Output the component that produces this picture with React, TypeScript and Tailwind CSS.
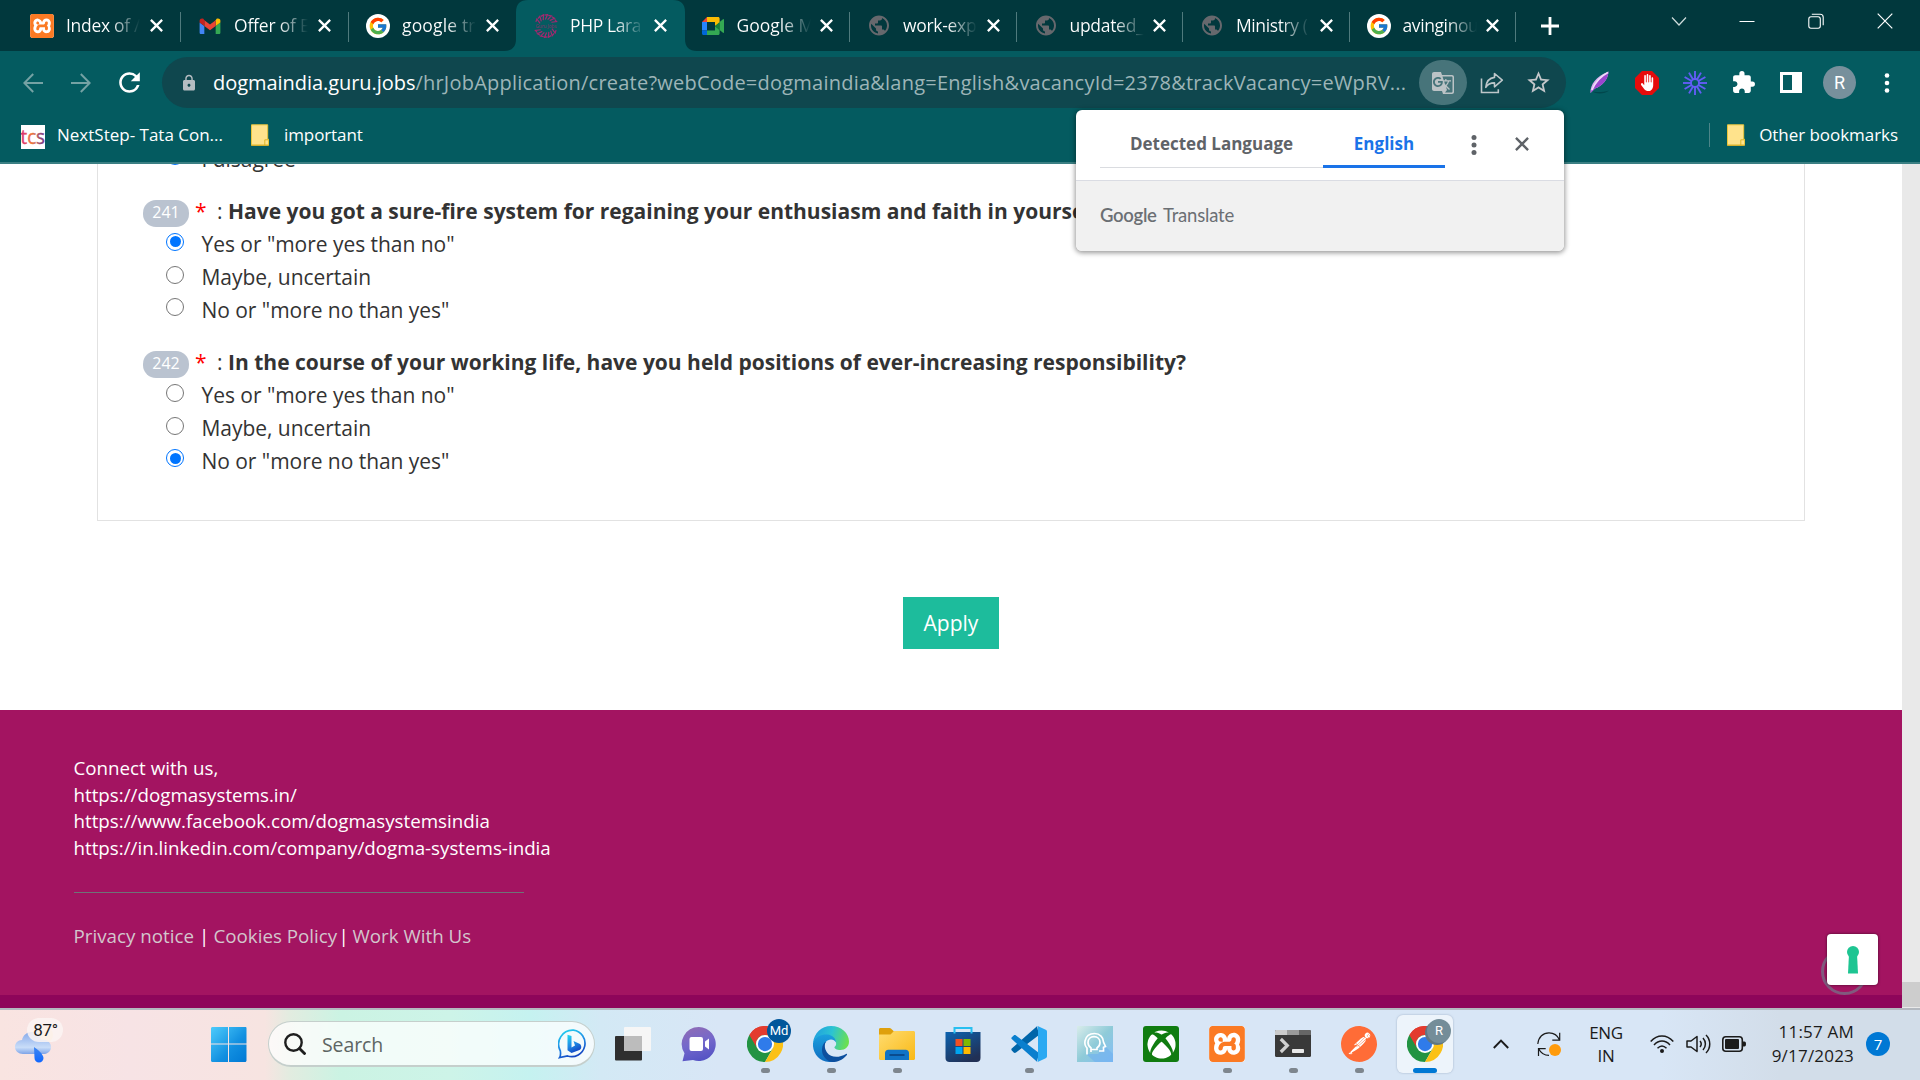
import React from "react";
import { FcGoogle } from "react-icons/fc";
import { FaXbox } from "react-icons/fa";
import { FaHand } from "react-icons/fa6";
import { SiXampp, SiPostman } from "react-icons/si";
import { MdPublic, MdLock, MdRefresh, MdStarBorder, MdExtension, MdGTranslate } from "react-icons/md";

/* ---------- small icons ---------- */

function XamppIcon({ large }: { large?: boolean }) {
  return (
    <span className={`flex items-center justify-center rounded-[3px] bg-white ${large ? "size-9" : "size-6"}`}>
      <SiXampp size={large ? 36 : 24} color="#fb7a24" />
    </span>
  );
}

function GmailIcon() {
  return (
    <svg viewBox="0 0 24 18" className="mt-px h-[17px] w-6">
      <path fill="#4285f4" d="M1 2.500v13C1 16.300 1.600 17 2.500 17H6V8.500L1 4.800z" />
      <path fill="#34a853" d="M18 17h3.500c.9 0 1.500-.7 1.500-1.500V4.800L18 8.500z" />
      <path fill="#fbbc04" d="M18 2.300v6.200l5-3.700V2.900C23 .8 20.600-.2 19 .9z" />
      <path fill="#ea4335" d="M6 8.500V2.300l6 4.500 6-4.500v6.200L12 13z" />
      <path fill="#c5221f" d="M1 2.900v1.900l5 3.700V2.300L5 .9C3.400-.2 1 .8 1 2.900z" />
    </svg>
  );
}

function GoogleIcon() {
  return (
    <span className="flex size-6 items-center justify-center rounded-full bg-white">
      <FcGoogle size={20} />
    </span>
  );
}

function GuruIcon() {
  return (
    <svg viewBox="0 0 24 24" className="size-6">
      {Array.from({ length: 18 }, (_, i) =>
        i % 9 === 4 || i % 9 === 5 ? null : (
          <path key={i} d="M10.500 1.200 13.500.6 11.400 5.500" fill="none" stroke="#a3286f" strokeWidth="1.200" transform={`rotate(${i * 20} 12 12)`} />
        ),
      )}
      <text x="12" y="13.500" fontSize="4.600" textAnchor="middle" fill="#8d2d69" fontFamily="Open Sans">Guru Jobs</text>
    </svg>
  );
}

function MeetIcon() {
  return (
    <svg viewBox="0 0 24 20" className="h-[20px] w-6">
      <path fill="#fbbc04" d="M6 1h11c1 0 1.600.6 1.600 1.500V7L14 10V6H6z" />
      <path fill="#ea4335" d="M6 1v5H1z" />
      <path fill="#2684fc" d="M1 6h5v8.500H1z" />
      <path fill="#0066da" d="M1 14.500h5V19H2.500C1.600 19 1 18.400 1 17.500z" />
      <path fill="#34a853" d="M6 14.500h8v-4.500l4.600 4v3.500c0 .9-.6 1.500-1.600 1.500H6z" />
      <path fill="#188038" d="M14 10l4.600-4v8z" />
      <path fill="#34a853" d="M18.600 6 22 3.200c.5-.4 1-.1 1 .5v12.600c0 .6-.5.9-1 .5L18.600 14z" />
    </svg>
  );
}

const Globe = () => <MdPublic size={25} color="#66686d" />;

function Cross({ size, width, color = "#fff" }: { size: number; width: number; color?: string }) {
  return (
    <svg viewBox="0 0 12 12" width={size} height={size} className="shrink-0">
      <path d="M.8.8l10.400 10.400M11.200.8.8 11.200" stroke={color} strokeWidth={width} />
    </svg>
  );
}

function Dots({ color, r }: { color: string; r: number }) {
  return (
    <svg viewBox="0 0 6 20" className="h-5 w-1.5 shrink-0" fill={color}>
      <circle cx="3" cy="2.500" r={r} />
      <circle cx="3" cy="10" r={r} />
      <circle cx="3" cy="17.500" r={r} />
    </svg>
  );
}

function BackArrow({ flip }: { flip?: boolean }) {
  return (
    <svg viewBox="0 0 20 20" className={flip ? "size-5 rotate-180" : "size-5"} fill="none" stroke="#75a2a4" strokeWidth="2">
      <path d="M20 10H1.500M10.200 1 1.300 10l8.900 9" />
    </svg>
  );
}

function FolderMark() {
  return (
    <svg viewBox="0 0 18 22" className="h-[22px] w-[18px] shrink-0">
      <path d="M.5.8h16.200v14.400h.8v6H.5z" fill="#ffe38c" stroke="#e9c53b" />
      <path d="M13.800 21v-5.200h3.400" fill="none" stroke="#dfb629" />
      <path d="M.3 21.300h17.200" stroke="#d8b02b" strokeWidth="1.200" />
    </svg>
  );
}

/* ---------- tab strip ---------- */

type Tab = { icon: React.ReactNode; title: string; width: string; track: string; active?: boolean; line?: boolean };

const tabs: Tab[] = [
  { icon: <XamppIcon />, title: "Index of /", width: "w-[168px]", track: "tracking-[-0.3px]", line: true },
  { icon: <GmailIcon />, title: "Offer of E", width: "w-[168px]", track: "tracking-[-0.2px]", line: true },
  { icon: <GoogleIcon />, title: "google tr", width: "w-[168px]", track: "tracking-[0.15px]" },
  { icon: <GuruIcon />, title: "PHP Lara", width: "w-[166.500px]", track: "tracking-[-0.4px]", active: true },
  { icon: <MeetIcon />, title: "Google M", width: "w-[166.500px]", track: "tracking-[0px]", line: true },
  { icon: <Globe />, title: "work-exp", width: "w-[166.500px]", track: "tracking-[-0.3px]", line: true },
  { icon: <Globe />, title: "updated_", width: "w-[166.500px]", track: "tracking-[-0.3px]", line: true },
  { icon: <Globe />, title: "Ministry (", width: "w-[166.500px]", track: "tracking-[-0.4px]", line: true },
  { icon: <GoogleIcon />, title: "avinginou", width: "w-[166.500px]", track: "tracking-[-0.4px]", line: true },
];

function TabItem({ tab }: { tab: Tab }) {
  return (
    <div className={`relative flex h-full shrink-0 items-center pl-[17px] ${tab.width}`}>
      {tab.active && (
        <svg viewBox="0 0 193 51" className="absolute top-0 -left-[13px] h-[51px] w-[193px]">
          <path d="M0 51C8 51 12 47 12 39V12C12 4 16 0 24 0H169c8 0 12 4 12 12V39c0 8 4 12 12 12z" fill="#045b60" />
        </svg>
      )}
      <span className="relative flex size-6 shrink-0 items-center justify-center">{tab.icon}</span>
      <span className={`relative ml-3 w-[74px] overflow-hidden bg-gradient-to-r from-white from-60% to-transparent bg-clip-text pb-px text-[17.500px] leading-[26px] whitespace-nowrap text-transparent ${tab.track}`}>
        {tab.title}
      </span>
      <span className="relative ml-[8px] flex w-4 justify-center">
        <Cross size={13} width={2.100} />
      </span>
      {tab.line && <span className="absolute top-3 right-0 h-[30px] w-px bg-[#4f7a7d]" />}
    </div>
  );
}

function TabStrip() {
  return (
    <div className="flex h-[51px] items-center bg-[#01383d] pl-[13px]">
      {tabs.map((t) => (
        <TabItem key={t.title} tab={t} />
      ))}
      <svg viewBox="0 0 18 18" className="ml-[25px] size-[18px]" stroke="#fff" strokeWidth="2.800">
        <path d="M9 0v18M0 9h18" />
      </svg>
      <div className="ml-auto flex h-full items-start pt-[13px] pr-[27px]">
        <svg viewBox="0 0 16 16" className="mr-[52px] size-4" fill="none" stroke="#cfdcdc" strokeWidth="1.200">
          <path d="M1 4.500l7 7.500 7-7.500" />
        </svg>
        <svg viewBox="0 0 16 16" className="mr-[53px] size-4" stroke="#fff" strokeWidth="1">
          <path d="M.5 8.500h15" />
        </svg>
        <svg viewBox="0 0 16 16" className="mr-[53px] size-4" fill="none" stroke="#fff" strokeWidth="1.100">
          <rect x=".8" y="3.700" width="11.500" height="11.500" rx="2.200" />
          <path d="M3.800 1.200h8.400c2 0 3 1 3 3v8" />
        </svg>
        <svg viewBox="0 0 16 16" className="size-4" stroke="#fff" strokeWidth="1.200">
          <path d="M.7.7l14.600 14.600M15.300.7.7 15.300" />
        </svg>
      </div>
    </div>
  );
}

/* ---------- toolbar ---------- */

function Toolbar() {
  return (
    <div className="flex h-[63px] items-center pl-[23px]">
      <BackArrow />
      <span className="ml-7 flex">
        <BackArrow flip />
      </span>
      <MdRefresh size={31} color="#fff" className="ml-[23px]" />
      <div className="ml-[17px] flex h-[51px] w-[1404px] shrink-0 items-center rounded-full bg-[#0f474e] pl-[18px]">
        <MdLock size={18} color="#b5bdc2" className="shrink-0" />
        <div className="ml-[15px] w-[1206px] text-[20px] leading-[30px] whitespace-nowrap text-[#9db5b8]">
          <span className="tracking-[-0.05px] text-white">dogmaindia.guru.jobs</span>
          <span className="tracking-[0.225px]">/hrJobApplication/create?webCode=dogmaindia&amp;lang=English&amp;vacancyId=2378&amp;trackVacancy=eWpRV...</span>
        </div>
        <span className="flex h-[45px] w-[48px] shrink-0 items-center justify-center rounded-full bg-[#47747a]">
          <MdGTranslate size={24} color="#bcc3c6" />
        </span>
        <svg viewBox="0 0 24 22" className="ml-[13px] h-[22px] w-6 shrink-0" fill="none" stroke="#bdc6c9" strokeWidth="1.600">
          <path d="M1.500 6.500v14h16.800v-3.200" />
          <path d="M14.500 1.500l7.800 6.700-7.800 6.600v-3.900c-4 0-7 1.500-8.700 4.500.5-5.600 3.400-9.400 8.700-10z" strokeLinejoin="round" />
        </svg>
        <MdStarBorder size={27} color="#c4c7ca" className="ml-[21px] shrink-0" />
      </div>
      <div className="flex items-center pl-6">
        <svg viewBox="0 0 20 24" className="h-6 w-5">
          <path d="M1 20c4 1.600 12 1.500 18-.5-4 3.500-13 4-18 .5z" fill="#01474c" />
          <path d="M.5 22C0 14 6 5 18.500.5 18 9 12 15 5 17.500z" fill="#d9aef0" />
          <path d="M.5 22C3 15 8 8 18.500.5 18 9 12 15 5 17.500z" fill="#9a45cf" />
          <path d="M2 19C5 12 11 5 18 1.500" stroke="#f0dcfa" strokeWidth="1.500" fill="none" />
        </svg>
        <span className="relative ml-[25px] flex size-6 items-center justify-center">
          <svg viewBox="0 0 24 24" className="absolute inset-0 size-6">
            <path d="M7 0h10l7 7v10l-7 7H7l-7-7V7z" fill="#e60c0c" />
          </svg>
          <FaHand size={16} color="#fff" className="relative h-[17px] w-[13px]" preserveAspectRatio="none" />
        </span>
        <svg viewBox="0 0 24 24" className="ml-6 size-6" stroke="#625df5" fill="none" strokeWidth="1.900">
          <circle cx="12" cy="12" r="4" />
          {Array.from({ length: 12 }, (_, i) => (
            <path key={i} d="M12 0v8" transform={`rotate(${i * 30} 12 12)`} />
          ))}
        </svg>
        <MdExtension size={25} color="#fff" className="ml-[24px]" />
        <svg viewBox="0 0 22 21" className="ml-6 h-[21px] w-[22px]">
          <path d="M0 0h22v21H0zM3 3v15h9V3z" fill="#fff" fillRule="evenodd" />
        </svg>
        <span className="ml-[21px] flex size-[33px] items-center justify-center rounded-full bg-[#77909c] font-[Roboto] text-[18px] text-white">R</span>
        <span className="ml-7 flex">
          <Dots color="#fff" r={2.300} />
        </span>
      </div>
    </div>
  );
}

function Bookmarks() {
  return (
    <div className="flex h-[48px] items-center pb-[6px] pl-[21px] text-[17px] text-white">
      <span className="mt-1 flex size-6 items-center justify-center overflow-hidden bg-white">
        <svg viewBox="0 0 24 24" className="size-6">
          <defs>
            <linearGradient id="tcs" x1="0" x2="1">
              <stop offset="0" stopColor="#d6247c" />
              <stop offset=".45" stopColor="#f0793c" />
              <stop offset="1" stopColor="#6a2d91" />
            </linearGradient>
          </defs>
          <text x="-.5" y="19" fontSize="20" textLength="24.500" lengthAdjust="spacingAndGlyphs" fill="url(#tcs)" stroke="url(#tcs)" strokeWidth=".4" fontFamily="Open Sans">tcs</text>
        </svg>
      </span>
      <span className="ml-3 w-[168px] tracking-[0px] whitespace-nowrap">NextStep- Tata Con...</span>
      <span className="ml-[26px] flex">
        <FolderMark />
      </span>
      <span className="ml-[15px] tracking-[-0.1px]">important</span>
      <span className="ml-auto h-6 w-px bg-[#4c8589]" />
      <span className="ml-[17px] flex">
        <FolderMark />
      </span>
      <span className="mr-[22px] ml-[14px] tracking-[-0.05px]">Other bookmarks</span>
    </div>
  );
}

function TranslatePopup() {
  return (
    <div className="absolute top-[110px] left-[1076px] z-10 flex h-[141px] w-[488px] flex-col overflow-hidden rounded-md bg-white shadow-[0_1px_5px_1px_rgba(0,0,0,0.4)]">
      <div className="flex h-[71px] items-center border-b border-[#dadce3] pl-6">
        <div className="flex h-[58px] w-[223px] items-center justify-center self-start border-b border-[#dadce0] pt-[10px] text-[17px] font-bold tracking-[0px] text-[#5f6368]">
          Detected Language
        </div>
        <div className="flex h-[58px] w-[122px] items-center justify-center self-start border-b-[3px] border-[#1a73e8] pt-[12px] text-[17px] font-bold text-[#1a73e8]">
          English
        </div>
        <span className="ml-[26px] flex">
          <Dots color="#5f6368" r={2.500} />
        </span>
        <span className="ml-[38px] pb-[3px]">
          <Cross size={14} width={2} color="#5f6368" />
        </span>
      </div>
      <div className="flex flex-1 items-center bg-[#f1f1f1] pb-px pl-6 font-[Lato] text-[18.500px] text-[#6b6f74]">
        <span className="w-[60px] font-semibold tracking-[-0.3px]">Google</span>
        <span className="ml-[3px] tracking-[-0.2px]">Translate</span>
      </div>
    </div>
  );
}

/* ---------- form ---------- */

function Option({ label, checked }: { label: string; checked?: boolean }) {
  return (
    <div className="flex h-[32.670px] items-center pl-[23px]">
      <span className={`-mt-[4px] flex size-[18px] items-center justify-center rounded-full ${checked ? "border-[1.500px] border-[#0075ff]" : "border-[1.500px] border-[#767676]"}`}>
        {checked && <span className="size-[11px] rounded-full bg-[#0075ff]" />}
      </span>
      <span className="ml-[17.500px] pt-[2.500px] tracking-[-0.04px]">{label}</span>
    </div>
  );
}

const answers = ['Yes or "more yes than no"', "Maybe, uncertain", 'No or "more no than yes"'];

function Question({ no, text, picked }: { no: number; text: string; picked: number }) {
  return (
    <div className="mt-[21px]">
      <div className="mb-0.5 flex h-[30px] leading-[30px] whitespace-nowrap">
        <span className="mt-1 flex h-[27px] w-[46px] items-center justify-center rounded-[13px] bg-[#bac3d0] pb-[3px] text-[16px] leading-6 text-white">{no}</span>
        <span className="ml-[6px] w-[22px] text-[#f00]">*</span>
        <span className="w-[11px] text-[#333]">:</span>
        <span className="font-bold text-[#333]">{text}</span>
      </div>
      {answers.map((a, i) => (
        <Option key={a} label={a} checked={i === picked} />
      ))}
    </div>
  );
}

function Page() {
  return (
    <div className="flex h-[844px] overflow-hidden bg-white">
      <div className="relative flex w-[1902px] flex-col">
        <div className="mr-[97px] ml-[97px] h-[357px] overflow-hidden border-x border-b border-[#e2e2e2] pl-[45px] text-[21px] text-[#333]">
          <div className="-mt-[22px]">
            <Option label="I disagree" checked />
          </div>
          <Question no={241} text="Have you got a sure-fire system for regaining your enthusiasm and faith in yourself?" picked={0} />
          <Question no={242} text="In the course of your working life, have you held positions of ever-increasing responsibility?" picked={2} />
        </div>
        <div className="mt-[76px] ml-[903px] flex h-[52px] w-[96px] items-center justify-center bg-[#1dbc9c] pt-[2px] text-[21px] text-white">Apply</div>
        <footer className="mt-[61px] flex-1 bg-[#a31461] pt-[45px] pl-[73.500px] text-[18.750px] leading-[26.670px] text-white">
          <p>Connect with us,</p>
          <p>https://dogmasystems.in/</p>
          <p>https://www.facebook.com/dogmasystemsindia</p>
          <p>https://in.linkedin.com/company/dogma-systems-india</p>
          <div className="mt-[30px] h-px w-[450px] bg-[#6f7377]" />
          <div className="mt-[30px] flex whitespace-nowrap text-[#d3c6cd]">
            <span className="w-[125.500px]">Privacy notice</span>
            <span className="w-[14.500px] text-white">|</span>
            <span className="w-[125px]">Cookies Policy</span>
            <span className="w-[14px] text-white">|</span>
            <span>Work With Us</span>
          </div>
        </footer>
        <div className="h-[13px] bg-[#8e055a]" />
        <span className="absolute right-[34px] bottom-[13px] size-[47px] rounded-full border-[3px] border-[#81597e]" />
        <span className="absolute right-6 bottom-[23px] flex size-[51px] items-center justify-center rounded bg-white shadow-[0_0_3px_rgba(0,0,0,0.6)]">
          <svg viewBox="0 0 12 28" className="h-7 w-3" fill="#1ec592">
            <circle cx="6" cy="6" r="6" />
            <path d="M2 8h8l1 19.500H1z" />
          </svg>
        </span>
      </div>
      <div className="flex flex-1 flex-col justify-end bg-[#e9e9e9]">
        <div className="mb-px h-[25px] bg-[#cdcdcd]" />
      </div>
    </div>
  );
}

/* ---------- taskbar ---------- */

function ChromeIcon() {
  return (
    <svg viewBox="0 0 48 48" className="size-9">
      <path d="M24 24 3.200 12A24 24 0 0 1 44.800 12z" fill="#e33b2e" />
      <path d="M24 24 3.200 12A24 24 0 0 0 24 48l10.400-18z" fill="#229342" />
      <path d="M24 12H44.800A24 24 0 0 1 24 48L34.400 30z" fill="#fbc116" />
      <path d="M3.200 12 13.600 30 24 12z" fill="#229342" />
      <path d="M24 12h20.800A24 24 0 0 0 3.200 12l10.400 18A12 12 0 0 1 24 12z" fill="#e33b2e" />
      <circle cx="24" cy="24" r="12" fill="#fff" />
      <circle cx="24" cy="24" r="9.500" fill="#2f7bea" />
    </svg>
  );
}

function ChromeWithBadge({ label, className }: { label: string; className: string }) {
  return (
    <span className="relative flex">
      <ChromeIcon />
      <span className={`absolute -top-[7px] -right-[8px] flex size-6 items-center justify-center rounded-full font-[Roboto] text-[13px] text-white ${className}`}>{label}</span>
    </span>
  );
}

function EdgeIcon() {
  return (
    <svg viewBox="0 0 36 36" className="size-9">
      <defs>
        <linearGradient id="eg1" x1="0" y1=".3" x2="1" y2=".5">
          <stop offset="0" stopColor="#1f9fe0" />
          <stop offset=".5" stopColor="#2cc3d2" />
          <stop offset="1" stopColor="#6be04f" />
        </linearGradient>
        <linearGradient id="eg2" x1="0" y1="0" x2="0" y2="1">
          <stop offset="0" stopColor="#1ba0de" />
          <stop offset="1" stopColor="#0f6cc0" />
        </linearGradient>
      </defs>
      <path d="M0 17C1 7 8.500 0 18 0c10.500 0 18 7.500 18 15.500 0 5.500-4 8.500-8.500 8.500-4 0-6.500-1.500-6-3 2-1.500 2-4 1-6C20 9 8 7 0 17z" fill="url(#eg1)" />
      <path d="M0 17C3 9.500 10 8 14.500 8.500c5 .5 8.500 4 8.500 8-1-2-3-3-5-3-5 0-7.500 5-6.500 10 1 6 5.500 10 10 12C8 38.500-1 28 0 17z" fill="url(#eg2)" />
      <path d="M13 15.500c-2 3-1.500 7.500 1 11 4 5.500 12 5.500 19 1.500.8-.4 1.300.2.900.9C30.500 33 25 36.500 19 36c-6-1-10.500-7-10-13 .3-4 2-6.500 4-7.500z" fill="#0c4f9e" />
    </svg>
  );
}

function ExplorerIcon() {
  return (
    <svg viewBox="0 0 36 36" className="size-9">
      <defs>
        <linearGradient id="fg" x1="0" y1="0" x2="1" y2="1">
          <stop offset="0" stopColor="#ffdc70" />
          <stop offset="1" stopColor="#f9b916" />
        </linearGradient>
      </defs>
      <path d="M0 10V3.500C0 2.600.6 2 1.500 2h9c.7 0 1.200.2 1.700.7L15 5.500V12H0z" fill="#dfa00c" />
      <path d="M0 8.500h11.500L15 5h19.500c.9 0 1.500.6 1.500 1.500v26c0 .9-.6 1.500-1.500 1.500h-33C.6 34 0 33.400 0 32.500z" fill="url(#fg)" />
      <path d="M6 34v-7c0-2 1.300-3.300 3.300-3.300h17.400c2 0 3.300 1.300 3.300 3.300v7z" fill="#1073c6" />
      <path d="M10.500 29h15" stroke="#0a4b8e" strokeWidth="2" />
    </svg>
  );
}

function StoreIcon() {
  return (
    <svg viewBox="0 0 36 36" className="size-9">
      <defs>
        <linearGradient id="st" x1="0" y1="0" x2=".6" y2="1">
          <stop offset="0" stopColor="#0c63b0" />
          <stop offset="1" stopColor="#213055" />
        </linearGradient>
      </defs>
      <path d="M.5 6h35v26c0 2.500-1.500 4-4 4h-27c-2.500 0-4-1.500-4-4z" fill="url(#st)" />
      <path d="M9.500 7.500V2h17v5.500" fill="none" stroke="#28bff0" strokeWidth="2" />
      <path fill="#f25022" d="M10.500 13h7v7h-7z" />
      <path fill="#7fba00" d="M18.500 13h7v7h-7z" />
      <path fill="#00a4ef" d="M10.500 21h7v7h-7z" />
      <path fill="#ffb900" d="M18.500 21h7v7h-7z" />
    </svg>
  );
}

function VscodeIcon() {
  return (
    <svg viewBox="0 0 36 36" className="size-9">
      <path d="M1 22.300 26 .3 28 9 5 26.500c-.8.600-1.700.5-2.300 0L.800 24.500c-.7-.7-.6-1.500.2-2.200z" fill="#0065a9" />
      <path d="M1 13.300 26 35.700 28 27 5 9.500c-.8-.6-1.700-.5-2.300 0L.800 11.200c-.7.7-.6 1.500.2 2.100z" fill="#0a7fce" />
      <path d="M25.600.4c.5-.4 1-.5 1.600-.2l7.500 3.600c.8.400 1.300 1 1.300 1.900v24.600c0 .9-.5 1.500-1.300 1.900l-7.500 3.600c-.6.300-1.100.2-1.600-.2.900.5 1.400-.2 1.400-1.100V1.500c0-.9-.5-1.600-1.400-1.100z" fill="#2aa9f2" />
    </svg>
  );
}

function MindIcon() {
  return (
    <svg viewBox="0 0 36 36" className="size-9">
      <defs>
        <linearGradient id="mi" x1="0" y1="0" x2="1" y2="1">
          <stop offset="0" stopColor="#d9ecea" />
          <stop offset=".5" stopColor="#8fcbd8" />
          <stop offset="1" stopColor="#83bdf8" />
        </linearGradient>
      </defs>
      <path d="M0 0h36v36H0z" fill="url(#mi)" />
      <path d="M9 28h12l7-8 8 8v8H18z" fill="#6fb0ee" opacity=".6" />
      <g fill="none" stroke="#fff" strokeWidth="1.700">
        <path d="M10 28.500V22c-2-2-2.500-4-2-7 1-5 5-7.500 9.500-7.500 5.500 0 9 4 9 8.500l2 4.500-2 .8v3.700h-4.500" />
        <path d="M14 26v-4c-2-1.500-3-3.300-3-5.500 0-3.500 2.500-5.800 6-5.800s6 2.300 6 5.800c0 2.200-1 4-3 5.500v1.500h-6" />
      </g>
    </svg>
  );
}

function TerminalIcon() {
  return (
    <svg viewBox="0 0 36 36" className="size-9">
      <rect y="4" width="36" height="27" rx="1.500" fill="#393939" />
      <path d="M0 9V5.500C0 4.600.6 4 1.500 4H12v5z" fill="#cbcbcb" />
      <path d="M12 4h12v5H12z" fill="#9a9a9a" />
      <path d="M24 4h10.500c.9 0 1.500.6 1.500 1.500V9H24z" fill="#666" />
      <path d="M5.800 13l6.500 6.500-6.500 6.500" fill="none" stroke="#d0d0d0" strokeWidth="3.200" />
      <rect x="17" y="23" width="12" height="4" rx=".8" fill="#e8e8e8" />
    </svg>
  );
}

function TaskViewIcon() {
  return (
    <svg viewBox="0 0 36 36" className="size-9">
      <rect y="10" width="27" height="24.500" rx="1" fill="#2f2f2f" />
      <rect x="9" y="1" width="27" height="24" rx="1" fill="#f6f6f6" />
      <path d="M9 10h18v15H9z" fill="#bcbcbc" />
    </svg>
  );
}

function ChatIcon() {
  return (
    <svg viewBox="0 0 36 36" className="size-9">
      <defs>
        <linearGradient id="ch" x1=".2" y1="0" x2=".5" y2="1">
          <stop offset="0" stopColor="#8f6cb5" />
          <stop offset=".5" stopColor="#7468cb" />
          <stop offset="1" stopColor="#5553c4" />
        </linearGradient>
      </defs>
      <path d="M18 1a17 17 0 1 1-6 33L1.500 35.200l2-8A17 17 0 0 1 18 1z" fill="url(#ch)" />
      <rect x="8.500" y="11" width="13.500" height="14" rx="2" fill="#fff" />
      <path d="M24 15.500l4-3v11l-4-3z" fill="#fff" />
    </svg>
  );
}

function XboxTile() {
  return (
    <span className="flex size-9 items-center justify-center rounded-[3px] bg-[#107c10]">
      <FaXbox size={29} color="#fff" />
    </span>
  );
}

function PostmanIcon() {
  return (
    <span className="relative flex size-9 items-center justify-center">
      <span className="absolute size-[33px] rounded-full bg-white" />
      <SiPostman size={36} color="#ff6c37" className="relative" />
    </span>
  );
}

const apps: { id: string; icon: React.ReactNode; running?: boolean; active?: boolean }[] = [
  { id: "taskview", icon: <TaskViewIcon /> },
  { id: "chat", icon: <ChatIcon /> },
  { id: "chrome-md", icon: <ChromeWithBadge label="Md" className="bg-[#01579b]" />, running: true },
  { id: "edge", icon: <EdgeIcon />, running: true },
  { id: "explorer", icon: <ExplorerIcon />, running: true },
  { id: "store", icon: <StoreIcon /> },
  { id: "vscode", icon: <VscodeIcon />, running: true },
  { id: "mind", icon: <MindIcon /> },
  { id: "xbox", icon: <XboxTile /> },
  { id: "xampp", icon: <XamppIcon large />, running: true },
  { id: "terminal", icon: <TerminalIcon />, running: true },
  { id: "postman", icon: <PostmanIcon />, running: true },
  { id: "chrome-r", icon: <ChromeWithBadge label="R" className="bg-[#748d99] shadow-[-2px_2px_0_#5f7783]" />, active: true },
];

function Weather() {
  return (
    <div className="relative mt-2 ml-[15px] h-[46px] w-12">
      <svg viewBox="0 0 48 46" className="h-[46px] w-12">
        <defs>
          <linearGradient id="cl" x1="0" y1="0" x2="0" y2="1">
            <stop offset="0" stopColor="#86a9ea" />
            <stop offset=".7" stopColor="#c9ddf8" />
            <stop offset="1" stopColor="#7ea4e8" />
          </linearGradient>
          <linearGradient id="dr" x1="0" y1="0" x2="0" y2="1">
            <stop offset="0" stopColor="#3f86f0" />
            <stop offset="1" stopColor="#0f67ff" />
          </linearGradient>
        </defs>
        <circle cx="29" cy="17" r="9" fill="#ffd9b0" />
        <path d="M8 36c-4.500 0-8-3-8-7s3-7 7-7c1-5 5-8 9.500-8 5 0 8.500 3 9.500 7.500 6-.5 10 3 10 7.200S33 36 28.500 36z" fill="url(#cl)" />
        <path d="M19 29c3 2 9.500 7 9.500 11a4.500 4.500 0 0 1-9 0z" fill="url(#dr)" />
      </svg>
      <span className="absolute top-0 left-3 flex h-6 w-9 items-center justify-center rounded-full bg-[#fbf5f3]/85 pt-px pl-px font-[Roboto] text-[17px] tracking-[-0.3px] text-[#1b1b1b]">87°</span>
    </div>
  );
}

function SearchBox() {
  return (
    <div className="ml-[21px] flex h-[46px] w-[327px] items-center rounded-full border border-b-2 border-[#c5cfcc] bg-white/75 pl-[15px]">
      <svg viewBox="0 0 22 22" className="size-[22px]" fill="none" stroke="#1e1e1e" strokeWidth="2.400" strokeLinecap="round">
        <circle cx="9.500" cy="9.500" r="8.200" />
        <path d="M15.500 15.500l5 5" strokeWidth="2.900" />
      </svg>
      <span className="ml-4 pt-[2px] text-[19.500px] tracking-[-0.1px] text-[#5d6563]">Search</span>
      <svg viewBox="0 0 30 30" className="mr-[6px] ml-auto size-[30px]">
        <defs>
          <linearGradient id="bg" x1=".2" y1="0" x2=".6" y2="1">
            <stop offset="0" stopColor="#22cfee" />
            <stop offset=".5" stopColor="#1f8de6" />
            <stop offset="1" stopColor="#123fc0" />
          </linearGradient>
        </defs>
        <path d="M15.500 1.200A13.300 13.300 0 1 1 9.500 27L1.500 28.600c1.500-2.500 1.200-4.600.8-6.800A14 14 0 0 1 15.500 1.200z" fill="none" stroke="url(#bg)" strokeWidth="1.700" />
        <path d="M9.500 5.800l4 1.300v11.500l3.500-2-1.500-4.500 6.500 3c2 2 1.500 5-.5 6l-8 3-4-2.800z" fill="url(#bg)" />
      </svg>
    </div>
  );
}

function Tray() {
  return (
    <div className="ml-[35px] flex items-center pb-0.5 text-[#1b1b1b]">
      <svg viewBox="0 0 16 10" className="h-[10px] w-4" fill="none" stroke="currentColor" strokeWidth="1.900">
        <path d="M.8 9 8 1.500 15.200 9" />
      </svg>
      <svg viewBox="0 0 24 24" className="ml-7 size-6" fill="none" stroke="currentColor" strokeWidth="1.200">
        <path d="M.8 12C1.500 5 6 .8 12 .8c4.500 0 8.500 2.500 10.500 7M22.700.8v7.400h-7.400" />
        <path d="M1.500 24v-7.400h7.200M1.800 17c2 4 5.500 6.400 10.200 6.400" />
        <circle cx="18" cy="18" r="6" fill="#ff9b0c" stroke="none" />
      </svg>
      <div className="ml-[27px] flex w-9 flex-col items-center text-[17px] leading-[23px] tracking-[-0.3px]">
        <span>ENG</span>
        <span>IN</span>
      </div>
      <svg viewBox="0 0 24 18" className="ml-[26px] h-[18px] w-6" fill="none" stroke="currentColor" strokeWidth="1.500">
        <path d="M.7 6.500c6.500-7.500 16-7.500 22.600 0M4 10c4.800-5.200 11.200-5.200 16 0M7.500 13.300c2.800-2.800 6.200-2.800 9 0" />
        <circle cx="12" cy="16" r="2" fill="currentColor" stroke="none" />
      </svg>
      <svg viewBox="0 0 25 20" className="ml-3 h-5 w-[25px]" fill="none" stroke="currentColor" strokeWidth="1.500">
        <path d="M1 7v6h4l6 4.500v-15L5 7z" strokeLinejoin="round" />
        <path d="M14 7c1.500 1.800 1.500 4.200 0 6M17 4c3.200 3.500 3.200 8.500 0 12M20 1c5 5 5 13 0 18" />
      </svg>
      <svg viewBox="0 0 24 16" className="ml-[11px] h-4 w-6">
        <rect x=".8" y=".8" width="19.500" height="14.400" rx="3" fill="none" stroke="currentColor" strokeWidth="1.600" />
        <rect x="3" y="3" width="14" height="10" rx="1" fill="currentColor" />
        <path d="M21 5.500h1.500c.8 0 1.500.8 1.500 2.500s-.7 2.500-1.500 2.500H21z" fill="currentColor" />
      </svg>
      <div className="ml-[23px] flex w-[85px] flex-col items-end text-[17px] leading-6 whitespace-nowrap">
        <span className="tracking-[0.2px]">11:57 AM</span>
        <span className="tracking-[0.2px]">9/17/2023</span>
      </div>
      <span className="ml-[12px] flex size-6 items-center justify-center rounded-full bg-[#0078d4] text-[15px] text-white">7</span>
    </div>
  );
}

function Taskbar() {
  return (
    <div className="flex h-[72px] border-t-2 border-[#b3b8bf] bg-[linear-gradient(90deg,#f9e4e1_0px,#f7e3e5_130px,#f7e4e1_265px,#e2ece0_290px,#cbf3e3_340px,#cdf4e8_450px,#c5f2f0_530px,#d3e9f5_600px,#d8e6f6_720px,#d8e6f6_1660px,#d2dde9_1780px,#d2dde9_1920px)]">
      <Weather />
      <svg viewBox="0 0 36 36" className="mt-4 ml-[148px] size-9">
        <defs>
          <linearGradient id="wn" gradientUnits="userSpaceOnUse" x1="0" y1="0" x2="36" y2="36">
            <stop offset="0" stopColor="#4fcdfc" />
            <stop offset=".6" stopColor="#118fe0" />
            <stop offset="1" stopColor="#0078d4" />
          </linearGradient>
        </defs>
        <path d="M1.500 1H17v16.500H0V2.500C0 1.600.6 1 1.500 1zM18 1h16.500c.6 0 1 .5 1 1v15.500H18zM0 18.500h17V36H1.500C.6 36 0 35.400 0 34.500zM18 18.500h17.500v16c0 .9-.6 1.500-1.500 1.500H18z" fill="url(#wn)" />
      </svg>
      <div className="pt-[11px]">
        <SearchBox />
      </div>
      <div className="ml-[5px] flex pt-[5px]">
        {apps.map((a) => (
          <div key={a.id} className="flex w-[66px] justify-center">
            <div className={`relative flex h-[58px] w-14 justify-center rounded-md pt-[11px] ${a.active ? "bg-white/55 shadow-[0_0_2px_rgba(90,110,140,0.5)]" : ""}`}>
              {a.icon}
              {a.running && <span className="absolute bottom-0 h-[5px] w-[9px] rounded-full bg-[#7e868e]" />}
              {a.active && <span className="absolute bottom-0 h-[5px] w-6 rounded-full bg-[#0078d4]" />}
            </div>
          </div>
        ))}
      </div>
      <Tray />
    </div>
  );
}

export default function App() {
  return (
    <div className="relative flex h-[1080px] w-[1920px] flex-col overflow-hidden bg-white font-['Open_Sans',sans-serif]">
      <header className="flex h-[164px] flex-col border-b-2 border-[#3b7f83] bg-[#045b60]">
        <TabStrip />
        <Toolbar />
        <Bookmarks />
      </header>
      <TranslatePopup />
      <Page />
      <Taskbar />
    </div>
  );
}
